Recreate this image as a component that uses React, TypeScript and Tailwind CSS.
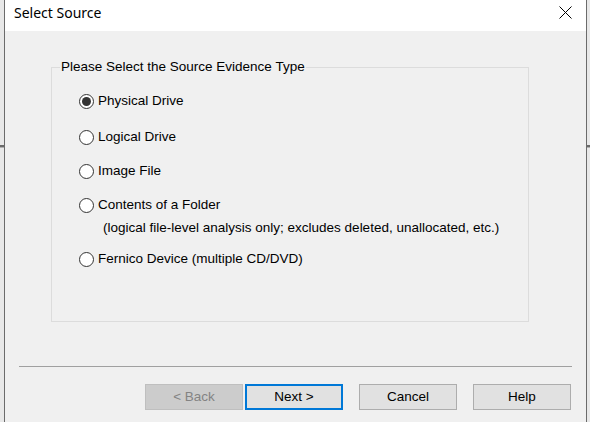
import React from "react";

const font = { fontFamily: '"Liberation Sans", Arial, sans-serif' };

function Radio({ checked, label }: { checked?: boolean; label: string }) {
  return (
    <div className="flex items-center h-[20px]">
      <div className="w-[15px] h-[15px] rounded-full border border-[#333333] bg-white flex items-center justify-center shrink-0">
        {checked && <div className="w-[9px] h-[9px] rounded-full bg-[#333333]" />}
      </div>
      <span className="ml-[4px] text-[13.5px] text-black leading-[20px] whitespace-nowrap">{label}</span>
    </div>
  );
}

function Btn({ label, variant }: { label: string; variant?: "disabled" | "default" }) {
  const base = "w-[98px] h-[26px] flex items-center justify-center text-[13.5px] shrink-0";
  if (variant === "disabled")
    return <div className={`${base} bg-[#cccccc] border border-[#bfbfbf] text-[#838383]`}>{label}</div>;
  if (variant === "default")
    return <div className={`${base} bg-[#e1e1e1] border-2 border-[#0078d7] text-black`}>{label}</div>;
  return <div className={`${base} bg-[#e1e1e1] border border-[#adadad] text-black`}>{label}</div>;
}

export default function App() {
  return (
    <div className="w-[590px] h-[422px] flex overflow-hidden bg-[#e8e8e8]" style={font}>
      {/* left strip (behind window) */}
      <div className="w-[4px] flex flex-col">
        <div className="h-[145px]" />
        <div className="h-[2px] bg-[#6a6a6a]" />
        <div className="h-[1px] bg-[#b0b0b0]" />
      </div>
      <div className="w-[1px] bg-[#6b6b6b]" />
      {/* window */}
      <div className="w-[581px] flex flex-col bg-[#f0f0f0]">
        <div className="h-[31px] bg-white flex items-start justify-between shrink-0">
          <span
            className="ml-[9px] mt-[3px] text-[14px] leading-[20px] text-black"
            style={{ fontFamily: '"Noto Sans", "Open Sans", sans-serif' }}
          >
            Select Source
          </span>
          <svg className="mr-[14px] mt-[6px]" width="13" height="13" viewBox="0 0 13 13">
            <path d="M0.5 0.5 L12.5 12.5 M12.5 0.5 L0.5 12.5" stroke="#000" strokeWidth="1" fill="none" />
          </svg>
        </div>
        <div className="flex flex-col">
          {/* group box */}
          <div className="relative ml-[46px] mt-[36px] w-[478px] h-[255px] border border-[#dcdcdc] flex flex-col pl-[27px] pt-[23px]">
            <span className="absolute left-[8px] top-[-9px] px-[1px] bg-[#f0f0f0] text-[13.5px] leading-[16px] text-black whitespace-nowrap">
              Please Select the Source Evidence Type
            </span>
            <Radio checked label="Physical Drive" />
            <div className="mt-[16px]">
              <Radio label="Logical Drive" />
            </div>
            <div className="mt-[14px]">
              <Radio label="Image File" />
            </div>
            <div className="mt-[14px]">
              <Radio label="Contents of a Folder" />
            </div>
            <div className="mt-[3px] h-[20px] pl-[24px] text-[13.5px] leading-[20px] text-black whitespace-nowrap">
              (logical file-level analysis only; excludes deleted, unallocated, etc.)
            </div>
            <div className="mt-[11px]">
              <Radio label="Fernico Device (multiple CD/DVD)" />
            </div>
          </div>
          {/* separator */}
          <div className="mx-[14px] mt-[44px] h-[1px] bg-[#a0a0a0]" />
          {/* buttons */}
          <div className="flex mt-[17px] ml-[140px]">
            <Btn label="< Back" variant="disabled" />
            <div className="ml-[2px]">
              <Btn label="Next >" variant="default" />
            </div>
            <div className="ml-[16px]">
              <Btn label="Cancel" />
            </div>
            <div className="ml-[16px]">
              <Btn label="Help" />
            </div>
          </div>
        </div>
      </div>
      <div className="w-[1px] bg-[#6b6b6b]" />
      {/* right strip */}
      <div className="w-[3px] flex flex-col">
        <div className="h-[145px]" />
        <div className="h-[2px] bg-[#6a6a6a]" />
        <div className="h-[1px] bg-[#b0b0b0]" />
      </div>
    </div>
  );
}
